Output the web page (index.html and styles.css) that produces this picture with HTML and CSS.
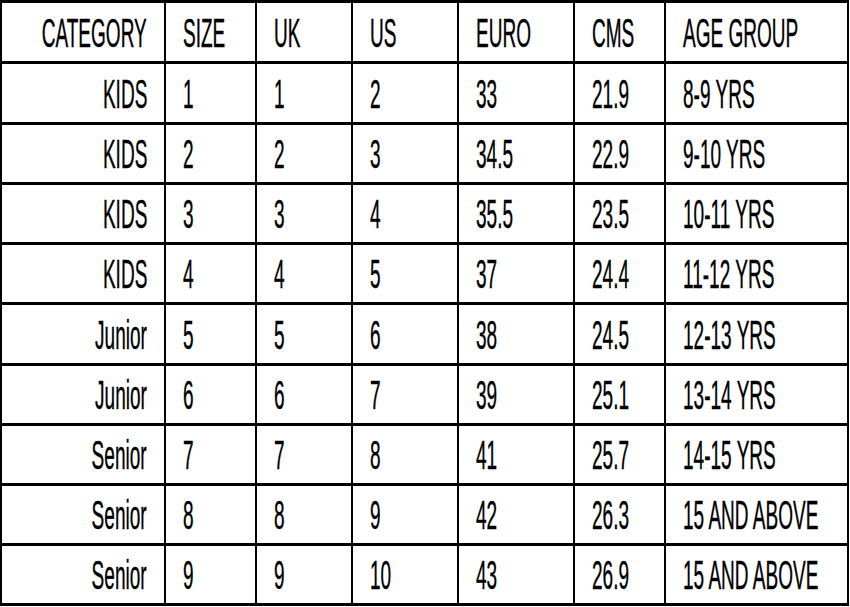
FILE: index.html
```html
<!DOCTYPE html>
<html>
<head>
<meta charset="utf-8">
<link rel="stylesheet" href="styles.css">
<title>Size Chart</title>
</head>
<body>
<div class="chart">
  <div class="cell cat"><span>CATEGORY</span></div><div class="cell"><span>SIZE</span></div><div class="cell"><span>UK</span></div><div class="cell"><span>US</span></div><div class="cell"><span>EURO</span></div><div class="cell"><span>CMS</span></div><div class="cell"><span>AGE GROUP</span></div>
  <div class="cell cat"><span>KIDS</span></div><div class="cell"><span>1</span></div><div class="cell"><span>1</span></div><div class="cell"><span>2</span></div><div class="cell"><span>33</span></div><div class="cell"><span>21.9</span></div><div class="cell"><span>8-9 YRS</span></div>
  <div class="cell cat"><span>KIDS</span></div><div class="cell"><span>2</span></div><div class="cell"><span>2</span></div><div class="cell"><span>3</span></div><div class="cell"><span>34.5</span></div><div class="cell"><span>22.9</span></div><div class="cell"><span>9-10 YRS</span></div>
  <div class="cell cat"><span>KIDS</span></div><div class="cell"><span>3</span></div><div class="cell"><span>3</span></div><div class="cell"><span>4</span></div><div class="cell"><span>35.5</span></div><div class="cell"><span>23.5</span></div><div class="cell"><span>10-11 YRS</span></div>
  <div class="cell cat"><span>KIDS</span></div><div class="cell"><span>4</span></div><div class="cell"><span>4</span></div><div class="cell"><span>5</span></div><div class="cell"><span>37</span></div><div class="cell"><span>24.4</span></div><div class="cell"><span>11-12 YRS</span></div>
  <div class="cell cat"><span>Junior</span></div><div class="cell"><span>5</span></div><div class="cell"><span>5</span></div><div class="cell"><span>6</span></div><div class="cell"><span>38</span></div><div class="cell"><span>24.5</span></div><div class="cell"><span>12-13 YRS</span></div>
  <div class="cell cat"><span>Junior</span></div><div class="cell"><span>6</span></div><div class="cell"><span>6</span></div><div class="cell"><span>7</span></div><div class="cell"><span>39</span></div><div class="cell"><span>25.1</span></div><div class="cell"><span>13-14 YRS</span></div>
  <div class="cell cat"><span>Senior</span></div><div class="cell"><span>7</span></div><div class="cell"><span>7</span></div><div class="cell"><span>8</span></div><div class="cell"><span>41</span></div><div class="cell"><span>25.7</span></div><div class="cell"><span>14-15 YRS</span></div>
  <div class="cell cat"><span>Senior</span></div><div class="cell"><span>8</span></div><div class="cell"><span>8</span></div><div class="cell"><span>9</span></div><div class="cell"><span>42</span></div><div class="cell"><span>26.3</span></div><div class="cell"><span>15 AND ABOVE</span></div>
  <div class="cell cat"><span>Senior</span></div><div class="cell"><span>9</span></div><div class="cell"><span>9</span></div><div class="cell"><span>10</span></div><div class="cell"><span>43</span></div><div class="cell"><span>26.9</span></div><div class="cell"><span>15 AND ABOVE</span></div>
</div>
</body>
</html>
```
FILE: styles.css
```css
html, body {
  margin: 0;
  padding: 0;
  background: #fff;
}
body {
  width: 850px;
  height: 607px;
  overflow: hidden;
  font-family: "Liberation Sans", Arial, sans-serif;
  color: #000;
}
.chart {
  display: grid;
  background: #000;
  padding: 3px 2px;
  box-sizing: border-box;
  width: 849px;
  column-gap: 2px;
  row-gap: 3px;
  grid-template-columns: 162px 89px 94px 104px 114px 89px 181px;
  grid-template-rows: 58px 58px 57px 57px 57px 58px 57px 57px 57px 57px;
}
.cell {
  background: #fff;
  display: flex;
  align-items: center;
  justify-content: flex-start;
  padding: 1px 16px 0 17px;
  overflow: visible;
  min-width: 0;
}
.cell span {
  display: inline-block;
  flex: none;
  white-space: nowrap;
  font-size: 40px;
  line-height: 1;
  transform: scaleX(0.476);
  transform-origin: left center;
  -webkit-text-stroke: 0.4px #000;
}
.cell.cat {
  justify-content: flex-end;
  padding: 1px 17px 0 0;
}
.cell.cat span {
  transform-origin: right center;
}
```
